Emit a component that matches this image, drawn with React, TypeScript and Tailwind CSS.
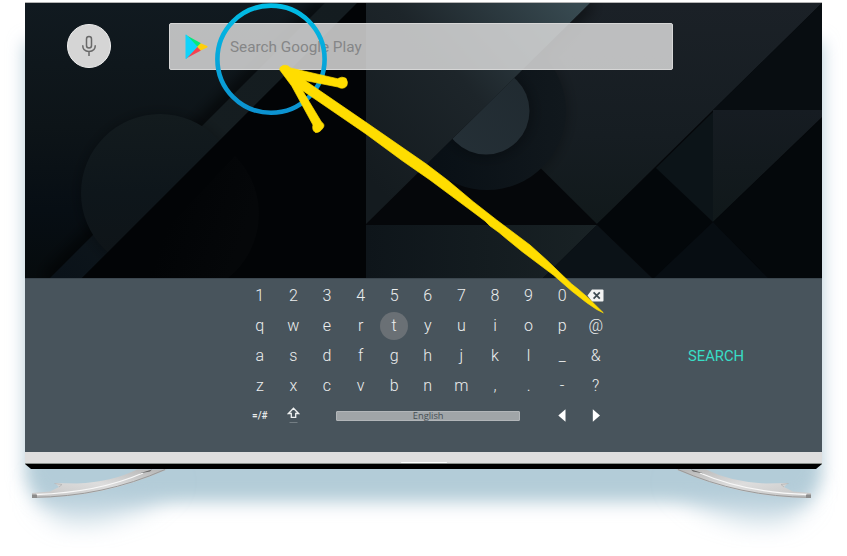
import React from "react";

const rows: string[][] = [
  ["1", "2", "3", "4", "5", "6", "7", "8", "9", "0", "del"],
  ["q", "w", "e", "r", "t", "y", "u", "i", "o", "p", "@"],
  ["a", "s", "d", "f", "g", "h", "j", "k", "l", "_", "&"],
  ["z", "x", "c", "v", "b", "n", "m", ",", ".", "-", "?"],
];

function Glow() {
  return (
    <svg className="pointer-events-none absolute inset-0" width="847" height="556" viewBox="0 0 847 556">
      <defs>
        <filter id="soft" x="-10%" y="-10%" width="120%" height="120%">
          <feGaussianBlur stdDeviation="8.5" />
        </filter>
        <filter id="softer" x="-30%" y="-60%" width="160%" height="220%">
          <feGaussianBlur stdDeviation="12" />
        </filter>
      </defs>
      <path d="M25 42H822V480L806 502H41L25 480Z" fill="#b3ccd8" filter="url(#soft)" />
      <g fill="#b3ccd8" fillOpacity="0.7" filter="url(#softer)">
        <path d="M38 480H175L145 508L100 522L62 522L38 502Z" />
        <path d="M809 480H672L702 508L745 522L785 522L809 502Z" />
      </g>
    </svg>
  );
}

function Wallpaper() {
  return (
    <svg className="absolute inset-0 h-full w-full" viewBox="25 3 797 275" preserveAspectRatio="none">
      <defs>
        <linearGradient id="left" x1="0" y1="0" x2="0" y2="1">
          <stop offset="0" stopColor="#111a20" />
          <stop offset="0.45" stopColor="#0d1418" />
          <stop offset="0.75" stopColor="#070e14" />
          <stop offset="1" stopColor="#060b0d" />
        </linearGradient>
        <linearGradient id="band" gradientUnits="userSpaceOnUse" x1="350" y1="0" x2="60" y2="278">
          <stop offset="0" stopColor="#141c20" />
          <stop offset="0.5" stopColor="#151d20" />
          <stop offset="1" stopColor="#0a1219" />
        </linearGradient>
        <linearGradient id="disc" x1="0" y1="0" x2="0" y2="1">
          <stop offset="0" stopColor="#131b1e" />
          <stop offset="0.5" stopColor="#0e161b" />
          <stop offset="1" stopColor="#0f1417" />
        </linearGradient>
        <linearGradient id="wedge" gradientUnits="userSpaceOnUse" x1="380" y1="190" x2="580" y2="10">
          <stop offset="0" stopColor="#141b1f" />
          <stop offset="0.5" stopColor="#1d252a" />
          <stop offset="1" stopColor="#384a51" />
        </linearGradient>
        <linearGradient id="panel" x1="0" y1="0" x2="0" y2="1">
          <stop offset="0" stopColor="#1b2127" />
          <stop offset="0.6" stopColor="#161d22" />
          <stop offset="1" stopColor="#11191b" />
        </linearGradient>
        <linearGradient id="ringfill" x1="0" y1="0" x2="1" y2="0">
          <stop offset="0" stopColor="#070e14" />
          <stop offset="1" stopColor="#11181d" />
        </linearGradient>
        <linearGradient id="half" x1="0" y1="1" x2="1" y2="0">
          <stop offset="0" stopColor="#253037" />
          <stop offset="1" stopColor="#202a30" />
        </linearGradient>
        <linearGradient id="floor" x1="0" y1="0" x2="1" y2="0">
          <stop offset="0" stopColor="#0e151a" />
          <stop offset="1" stopColor="#192225" />
        </linearGradient>
        <linearGradient id="tri" x1="0" y1="0" x2="0" y2="1">
          <stop offset="0" stopColor="#161c22" />
          <stop offset="1" stopColor="#10181a" />
        </linearGradient>
        <linearGradient id="ghost" gradientUnits="userSpaceOnUse" x1="180" y1="190" x2="250" y2="215">
          <stop offset="0" stopColor="#020406" />
          <stop offset="1" stopColor="#050709" />
        </linearGradient>
        <filter id="shade" x="-20%" y="-20%" width="140%" height="140%">
          <feGaussianBlur stdDeviation="7" />
        </filter>
        <clipPath id="upperLeft"><path d="M25 3H357L82 278H25Z" /></clipPath>
        <clipPath id="lowerRight"><path d="M590 3H822V278H366V224Z" /></clipPath>
        <clipPath id="panelClip"><path d="M590 3H822L597 224L481 109Z" /></clipPath>
      </defs>
      <rect x="25" y="3" width="341" height="275" fill="url(#left)" />
      <g clipPath="url(#upperLeft)">
        <path d="M325 3L48 280" stroke="#000" strokeOpacity="0.6" strokeWidth="16" filter="url(#shade)" />
        <path d="M325 3H359L82 280H48Z" fill="url(#band)" />
        <circle cx="160" cy="194" r="80" fill="#000" fillOpacity="0.3" filter="url(#shade)" />
        <circle cx="160" cy="193" r="79" fill="url(#disc)" />
      </g>
      <path d="M357 3H366V278H82Z" fill="#020406" />
      <path d="M235 156A82 82 0 0 1 228 278H120Z" fill="url(#ghost)" />
      <rect x="366" y="3" width="456" height="275" fill="#05070a" />
      <path d="M590 3H822L597 224L481 109Z" fill="url(#panel)" />
      <g clipPath="url(#panelClip)">
        <path d="M590 3L481 109" stroke="#000" strokeOpacity="0.5" strokeWidth="12" filter="url(#shade)" />
        <circle cx="487" cy="111" r="80" fill="#000" fillOpacity="0.3" filter="url(#shade)" />
      </g>
      <g clipPath="url(#lowerRight)">
        <circle cx="487" cy="111" r="79" fill="url(#ringfill)" />
        <circle cx="487" cy="112" r="45" fill="#000" fillOpacity="0.3" filter="url(#shade)" />
        <circle cx="486" cy="111" r="43.5" fill="url(#half)" />
      </g>
      <path d="M366 3H590L366 224Z" fill="url(#wedge)" />
      <path d="M366 225H597L543 278H366Z" fill="url(#floor)" />
      <path d="M597 225L652 278H543Z" fill="#0b1217" />
      <path d="M656 168L712 222L654 278L597 224Z" fill="#03070a" />
      <path d="M713 112V222L656 168Z" fill="#0c1418" />
      <path d="M822 3V110H713Z" fill="#080d11" />
      <path d="M713 110H822V117L713 222Z" fill="url(#tri)" />
      <path d="M822 118V278H768L713 222Z" fill="#04080b" />
      <path d="M713 222L768 278H654Z" fill="#070d12" />
    </svg>
  );
}

function PlayLogo() {
  return (
    <svg className="ml-[15px] shrink-0" width="24" height="26" viewBox="0 0 24 26">
      <path d="M1 1L16 9.2L12.3 12.9L1 1.5Z" fill="#08e77c" />
      <path d="M1 24.6L16 16.5L12.3 12.8L1 24Z" fill="#f8414f" />
      <path d="M.5 1.2Q.6 .2 1.5 .8L12.5 12.8L1.5 24.8Q.5 25.2 .5 24.2Z" fill="#10d3fb" />
      <path d="M15.8 9.2L22.2 12.1Q23.1 12.8 22.2 13.5L15.8 16.5L12.2 12.8Z" fill="#ffcf0c" />
    </svg>
  );
}

function SearchHeader() {
  return (
    <div className="relative flex items-center pl-[42px] pt-[20px]">
      <div className="mb-[2px] flex h-[44px] w-[44px] items-center justify-center rounded-full border border-[#eeeeee] bg-[#d5d5d5]">
        <svg width="16" height="22" viewBox="0 0 16 22" fill="none" stroke="#686868" strokeWidth="1.5">
          <rect x="5.5" y="1.5" width="5" height="11.5" rx="2.5" />
          <path d="M1.7 10.3C1.7 14.2 4.3 16.5 8 16.5S14.3 14.2 14.3 10.3M8 16.5V21" />
        </svg>
      </div>
      <div className="ml-[58px] flex h-[47px] w-[504px] items-center rounded-[2px] border border-[#d6d6d6] bg-[#dcdcdc]/84">
        <PlayLogo />
        <span className="ml-[21px] mt-[2px] whitespace-nowrap font-[Roboto,sans-serif] text-[15.3px] leading-none text-[#858687]">
          Search Google Play
        </span>
      </div>
    </div>
  );
}

function Key({ label }: { label: string }) {
  if (label === "del") {
    return (
      <div className="flex items-center justify-center">
        <svg className="mb-[2px]" width="17" height="13" viewBox="0 0 17 13">
          <path d="M5 .5H15.5Q16.5.5 16.5 1.5V11.5Q16.5 12.5 15.5 12.5H5L.5 6.5Z" fill="#f2f3f3" />
          <path d="M6.6 3.3L12.8 9.7M12.8 3.3L6.6 9.7" stroke="#3d4a52" strokeWidth="1.7" />
        </svg>
      </div>
    );
  }
  if (label === "t") {
    return (
      <div className="flex items-center justify-center">
        <span className="flex h-[28px] w-[28px] items-center justify-center rounded-full bg-[#6a7075]">t</span>
      </div>
    );
  }
  return <div className="flex items-center justify-center">{label}</div>;
}

function Keyboard() {
  return (
    <div className="flex h-[174px] border-t border-[#3c474f] bg-[#48545c] pl-[218px] font-[Roboto,sans-serif] text-[#eceeee]">
      <div className="w-[370px] pt-[2px]">
        {rows.map((row) => (
          <div
            key={row[0]}
            className="grid h-[30px] grid-cols-[repeat(11,33.6px)] text-[16px] font-light leading-none"
          >
            {row.map((label) => (
              <Key key={label} label={label} />
            ))}
          </div>
        ))}
        <div className="grid h-[29px] grid-cols-[repeat(11,33.6px)] items-center">
          <span className="text-center text-[10px] font-medium">=/#</span>
          <svg className="mx-auto" width="13" height="17" viewBox="0 0 13 17" fill="none">
            <path d="M6.5 1.3L11.5 6.5H8.7V10.3H4.3V6.5H1.5Z" stroke="#eef0f0" strokeWidth="1.3" />
            <path d="M2.5 15.5H10.5" stroke="#747e84" />
          </svg>
          <div className="col-span-6 ml-[26px] flex h-[10px] w-[184px] items-center justify-center rounded-[1px] border border-[#b2b6b9] bg-[#a0a5a8] font-['Open_Sans',sans-serif] text-[9.3px] leading-none text-[#464f55]">
            English
          </div>
          <span />
          <svg className="mx-auto" width="8" height="13" viewBox="0 0 8 13">
            <path d="M7.5 .2V12.8L.3 6.5Z" fill="#fff" />
          </svg>
          <svg className="mx-auto" width="8" height="13" viewBox="0 0 8 13">
            <path d="M.8 .2V12.8L8 6.5Z" fill="#fff" />
          </svg>
        </div>
      </div>
      <div className="ml-[75px] mt-[69px] text-[14.8px] leading-[16px] text-[#38ddc6]">SEARCH</div>
    </div>
  );
}

function Foot() {
  return (
    <g>
      <path
        d="M137 469.5Q112 482 77 483.5L55 483L59 487L50 491.5L32 493V498Q103 498 167 469.5Z"
        fill="url(#footFill)"
      />
      <path d="M33 497.3Q103 497 165 469.5" fill="none" stroke="#9a9a9a" strokeWidth="1" />
      <path d="M36 494.5Q98 492.5 143 473" fill="none" stroke="#f8f8f8" strokeWidth="1.3" />
      <path d="M54.5 483.5L62 484.5L59 487" fill="none" stroke="#b5b5b5" strokeWidth="0.8" />
      <path d="M32 494.5H37V498H32Z" fill="#8c8c8c" />
      <path d="M152 469.5L139 473.5L150 471.5Z" fill="#666" />
    </g>
  );
}

function Stand() {
  return (
    <svg className="pointer-events-none absolute inset-0" width="847" height="556" viewBox="0 0 847 556">
      <defs>
        <linearGradient id="footFill" x1="0" y1="1" x2="1" y2="0">
          <stop offset="0" stopColor="#c4c4c4" />
          <stop offset="0.5" stopColor="#dddddd" />
          <stop offset="1" stopColor="#b5b5b5" />
        </linearGradient>
      </defs>
      <Foot />
      <g transform="translate(843 0) scale(-1 1)">
        <Foot />
      </g>
    </svg>
  );
}

function Annotation() {
  return (
    <svg className="pointer-events-none absolute inset-0" width="847" height="556" viewBox="0 0 847 556">
      <defs>
        <linearGradient id="ring" x1="0" y1="0" x2="0" y2="1">
          <stop offset="0" stopColor="#00bce5" />
          <stop offset="1" stopColor="#0c92d0" />
        </linearGradient>
      </defs>
      <circle cx="271" cy="59.2" r="53.6" fill="none" stroke="url(#ring)" strokeWidth="4.6" />
      <path
        d="M279.8 70Q279 67 283 65.5Q288 64.5 290.5 68L337.5 78.7Q342 75.8 346 78.3Q348.5 82 346.7 86Q343 90 338 87L305 80.5L366 122.3L427 164.5L448 180.5L473.3 201.7L496.7 220L530 245L546.7 260L563.3 276L571.7 284L578 289L588 297.7L603.3 312.8L596.7 309.5L586.7 302.7L571.7 291L553.300 275L530 257.5L522 251.5L506.7 239L499 232.500L490 226L485 221L473 212L430 180L402 160.500L366 134L302.5 90.500L321.500 122Q325.5 124.5 323 128Q319 133.5 315 132.3Q311.8 130 313 125L291.7 86Z"
        fill="#ffdd00"
        stroke="#ffdd00"
        strokeWidth="0.7"
        strokeLinejoin="round"
      />
    </svg>
  );
}

export default function App() {
  return (
    <main className="relative h-[556px] w-[847px] overflow-hidden bg-white">
      <Glow />
      <Stand />
      <div className="relative ml-[25px] w-[797px] pt-[2px]">
        <div className="h-px bg-[#b5b5b5]" />
        <section className="relative h-[275px]">
          <Wallpaper />
          <SearchHeader />
        </section>
        <Keyboard />
        <div className="flex h-[12px] items-end justify-center border-b border-[#8b918d] bg-[#dedede]">
          <div className="h-px w-[46px] rounded-full bg-white" />
        </div>
        <div className="h-[5px] bg-black [clip-path:polygon(0_0,100%_0,calc(100%_-_6px)_100%,6px_100%)]" />
      </div>
      <Annotation />
    </main>
  );
}
